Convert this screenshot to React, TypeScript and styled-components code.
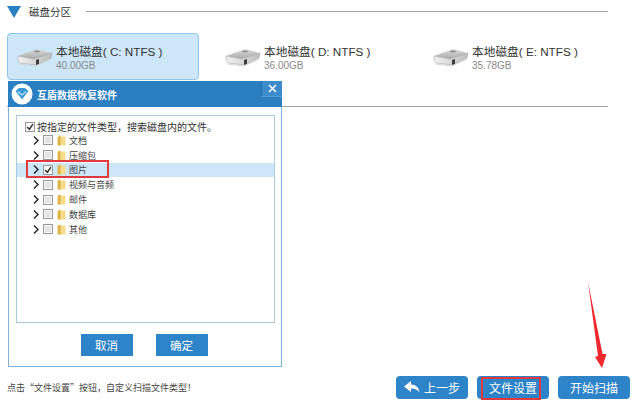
import styled, { createGlobalStyle } from "styled-components";

const GlobalStyle = createGlobalStyle`
  html, body {
    margin: 0;
    padding: 0;
    background: #fff;
  }
  body {
    font-family: "Liberation Sans", "Noto Sans CJK SC", sans-serif;
  }
`;

const Page = styled.div`
  position: relative;
  width: 633px;
  height: 400px;
  overflow: hidden;
  display: flex;
  flex-direction: column;
  background: #fff;
`;

const SectionHeader = styled.div`
  display: flex;
  align-items: center;
  height: 23px;
  padding: 0 25px 0 7px;
`;

const SectionTitle = styled.span`
  margin: 0 15px 0 8px;
  font-size: 10.5px;
  line-height: 24px;
  color: #333;
`;

const Rule = styled.div`
  flex: 1;
  height: 1px;
  background: #a3a3a3;
`;

const DiskRow = styled.div`
  display: flex;
  margin-top: 10px;
  padding-left: 7px;
  gap: 16px;
`;

const DiskCard = styled.div<{ $selected?: boolean }>`
  box-sizing: border-box;
  width: 192px;
  height: 47px;
  display: flex;
  align-items: center;
  gap: 3px;
  padding: 1px 0 0 9px;
  border-radius: 4px;
  border: 1px solid ${({ $selected }) => ($selected ? "#8fc6ec" : "transparent")};
  background: ${({ $selected }) => ($selected ? "#cde6f8" : "transparent")};
`;

const DiskText = styled.div`
  display: flex;
  flex-direction: column;
  padding-top: 2px;
`;

const DiskName = styled.span`
  font-size: 11.7px;
  line-height: 14px;
  color: #333;
  white-space: nowrap;
`;

const DiskSize = styled.span`
  font-size: 10px;
  line-height: 13px;
  color: #8a8a8a;
`;

const LowerRule = styled.div`
  margin: 26px 25px 0 7px;
  height: 1px;
  background: #a3a3a3;
`;

const Footer = styled.div`
  margin-top: auto;
  height: 24px;
  display: flex;
  align-items: center;
  justify-content: space-between;
  padding: 0 3px 1px 7px;
`;

const Hint = styled.span`
  font-family: "Noto Sans CJK SC", sans-serif;
  font-size: 9px;
  padding-top: 1px;
  color: #444;
`;

const ActionGroup = styled.div`
  display: flex;
  gap: 9px;
`;

const ActionButton = styled.button`
  width: 72px;
  height: 23px;
  padding: 0;
  border: 0;
  border-radius: 4px;
  background: #2d84c9;
  color: #fff;
  font: inherit;
  font-size: 12px;
  display: flex;
  align-items: center;
  justify-content: center;
  gap: 4px;
`;

const Dialog = styled.div`
  position: absolute;
  left: 8px;
  top: 81px;
  box-sizing: border-box;
  width: 274px;
  height: 286px;
  background: #fff;
  border: 1px solid #7fb2d8;
  border-top: 0;
  display: flex;
  flex-direction: column;
`;

const TitleBar = styled.div`
  position: relative;
  height: 26px;
  margin: 0 -1px;
  background: #2a7fc3;
  display: flex;
  align-items: center;
  padding-left: 3px;
  gap: 4px;
`;

const TitleText = styled.span`
  color: #fff;
  font-size: 10px;
  font-weight: bold;
  padding-top: 1px;
`;

const CloseBox = styled.div`
  position: absolute;
  right: 0;
  top: 0;
  width: 20px;
  height: 15px;
  background: #3c8ccb;
  border-left: 1px solid #1f6dab;
  border-bottom: 1px solid #5a9dd3;
  display: flex;
  align-items: center;
  justify-content: center;
`;

const TreePanel = styled.div`
  box-sizing: border-box;
  margin: 8px 6px 0 7px;
  height: 208px;
  border: 1px solid #a8cbe3;
  padding-top: 4px;
  display: flex;
  flex-direction: column;
`;

const TreeRoot = styled.div`
  display: flex;
  align-items: center;
  height: 13px;
  padding-left: 8px;
  gap: 2px;
  font-family: "Noto Sans CJK SC", sans-serif;
  font-size: 10px;
  color: #333;
  white-space: nowrap;
`;

const TreeRow = styled.div<{ $active?: boolean }>`
  display: flex;
  align-items: center;
  height: 14.8px;
  padding-left: 16px;
  font-size: 9px;
  color: #444;
  background: ${({ $active }) => ($active ? "#cde6f8" : "transparent")};
`;

const Check = styled.span<{ $on?: boolean }>`
  box-sizing: border-box;
  width: 10px;
  height: 10px;
  margin-left: 4px;
  border: 1px solid #9a9a9a;
  background: ${({ $on }) => ($on ? "#fff" : "#e4e4e4")};
  box-shadow: inset 0 0 0 1px #f5f5f5;
  display: flex;
  align-items: center;
  justify-content: center;
  flex: none;
`;

const RootCheck = styled(Check)`
  margin-left: 0;
`;

const RowLabel = styled.span`
  margin-left: 3px;
`;

const DialogActions = styled.div`
  display: flex;
  justify-content: center;
  gap: 23px;
  margin-top: 11px;
  padding-right: 2px;
`;

const DialogButton = styled.button`
  width: 52px;
  height: 22px;
  padding: 0;
  border: 0;
  background: #2d84c9;
  color: #fff;
  font: inherit;
  font-size: 11.5px;
`;

const RedFrame = styled.div<{ $left: number; $top: number; $w: number; $h: number }>`
  position: absolute;
  box-sizing: border-box;
  left: ${({ $left }) => $left}px;
  top: ${({ $top }) => $top}px;
  width: ${({ $w }) => $w}px;
  height: ${({ $h }) => $h}px;
  border: 2px solid #e0393e;
`;

const Arrow = styled.svg`
  position: absolute;
  left: 585px;
  top: 280px;
`;

const DiskIcon = () => (
  <svg width="36" height="22" viewBox="0 0 36 22" style={{ flex: "none" }}>
    <defs>
      <linearGradient id="diskTop" x1="0" y1="0" x2="0" y2="1">
        <stop offset="0" stopColor="#dcdcdc" />
        <stop offset="1" stopColor="#a9a9a9" />
      </linearGradient>
      <linearGradient id="diskFront" x1="0" y1="0" x2="1" y2="0">
        <stop offset="0" stopColor="#f2f2f2" />
        <stop offset="1" stopColor="#bdbdbd" />
      </linearGradient>
    </defs>
    <path d="M1 10 L20 3 L35 7 L17 13 Z" fill="url(#diskTop)" />
    <ellipse cx="20" cy="5.5" rx="3" ry="1" fill="#8c8c8c" />
    <path d="M1 10 L17 13 L35 7 L34 12 L19 19 L3 17 Q0 14 1 10 Z" fill="url(#diskFront)" stroke="#9c9c9c" strokeWidth="0.5" />
    <path d="M19 14 L22 13 L22 18 L19 19 Z" fill="#3e3e3e" />
    <path d="M3 18 L19 20 L34 13" fill="none" stroke="#d6d6d6" strokeWidth="1" />
  </svg>
);

const Tick = () => (
  <svg width="8" height="8" viewBox="0 0 7 7">
    <path d="M1 3.5 L3 5.5 L6 1" fill="none" stroke="#333" strokeWidth="1.3" />
  </svg>
);

const Chevron = () => (
  <svg width="6" height="9" viewBox="0 0 6 9" style={{ flex: "none" }}>
    <path d="M1 0.5 L5 4.5 L1 8.5" fill="none" stroke="#222" strokeWidth="1.4" />
  </svg>
);

const Folder = () => (
  <svg width="9" height="11" viewBox="0 0 9 11" style={{ flex: "none", marginLeft: 4 }}>
    <path d="M0.5 2 L3 0.5 L3 10.5 L0.5 10.5 Z" fill="#e0b84a" />
    <path d="M3 1.5 L8.5 1.5 L8.5 10.5 L3 10.5 Z" fill="#f6dc8a" />
    <path d="M3 0.5 L3 10.5" stroke="#c99a2e" strokeWidth="0.6" />
  </svg>
);

const ShieldLogo = () => (
  <svg width="22" height="22" viewBox="0 0 22 22" style={{ flex: "none" }}>
    <circle cx="11" cy="11" r="10.5" fill="#fff" />
    <path d="M4.5 8 L8 5 L14 5 L17.5 8 L11 16.5 Z" fill="#3a9ad9" />
    <path d="M7 8.5 L11 12 L15 8.5" fill="none" stroke="#bfe2f7" strokeWidth="1.2" />
  </svg>
);

const categories = ["文档", "压缩包", "图片", "视频与音频", "邮件", "数据库", "其他"];

const disks = [
  { letter: "C", size: "40.00GB", selected: true },
  { letter: "D", size: "36.00GB" },
  { letter: "E", size: "35.78GB" },
];

export default function App() {
  return (
    <Page>
      <GlobalStyle />
      <SectionHeader>
        <svg width="14" height="12" viewBox="0 0 14 12" style={{ flex: "none" }}>
          <path d="M0 0 H14 L7 12 Z" fill="#2a7fc3" />
        </svg>
        <SectionTitle>磁盘分区</SectionTitle>
        <Rule />
      </SectionHeader>
      <DiskRow>
        {disks.map((d) => (
          <DiskCard key={d.letter} $selected={d.selected}>
            <DiskIcon />
            <DiskText>
              <DiskName>本地磁盘( {d.letter}: NTFS )</DiskName>
              <DiskSize>{d.size}</DiskSize>
            </DiskText>
          </DiskCard>
        ))}
      </DiskRow>
      <LowerRule />
      <Footer>
        <Hint>点击“文件设置”按钮，自定义扫描文件类型！</Hint>
        <ActionGroup>
          <ActionButton>
            <svg width="16" height="12" viewBox="0 0 16 12">
              <path d="M0 5.5 L7 0 V3.5 C12 3.5 15 6.5 15.5 11.5 C13.5 8.5 11 7.5 7 7.5 V11 Z" fill="#fff" />
            </svg>
            上一步
          </ActionButton>
          <ActionButton>文件设置</ActionButton>
          <ActionButton>开始扫描</ActionButton>
        </ActionGroup>
      </Footer>

      <Dialog>
        <TitleBar>
          <ShieldLogo />
          <TitleText>互盾数据恢复软件</TitleText>
          <CloseBox>
            <svg width="9" height="9" viewBox="0 0 9 9">
              <path d="M1 1 L8 8 M8 1 L1 8" stroke="#fff" strokeWidth="1.5" />
            </svg>
          </CloseBox>
        </TitleBar>
        <TreePanel>
          <TreeRoot>
            <RootCheck $on>
              <Tick />
            </RootCheck>
            按指定的文件类型，搜索磁盘内的文件。
          </TreeRoot>
          {categories.map((c) => (
            <TreeRow key={c} $active={c === "图片"}>
              <Chevron />
              <Check $on={c === "图片"}>{c === "图片" && <Tick />}</Check>
              <Folder />
              <RowLabel>{c}</RowLabel>
            </TreeRow>
          ))}
        </TreePanel>
        <DialogActions>
          <DialogButton>取消</DialogButton>
          <DialogButton>确定</DialogButton>
        </DialogActions>
      </Dialog>

      <RedFrame $left={26} $top={160} $w={83} $h={18} />
      <RedFrame $left={481} $top={377} $w={60} $h={23} />
      <Arrow width="24" height="92" viewBox="0 0 24 92">
        <path d="M3 2 L17.5 74 L21.5 74 L17 88 L10 77 L13 76 Z" fill="#f0282d" />
      </Arrow>
    </Page>
  );
}
